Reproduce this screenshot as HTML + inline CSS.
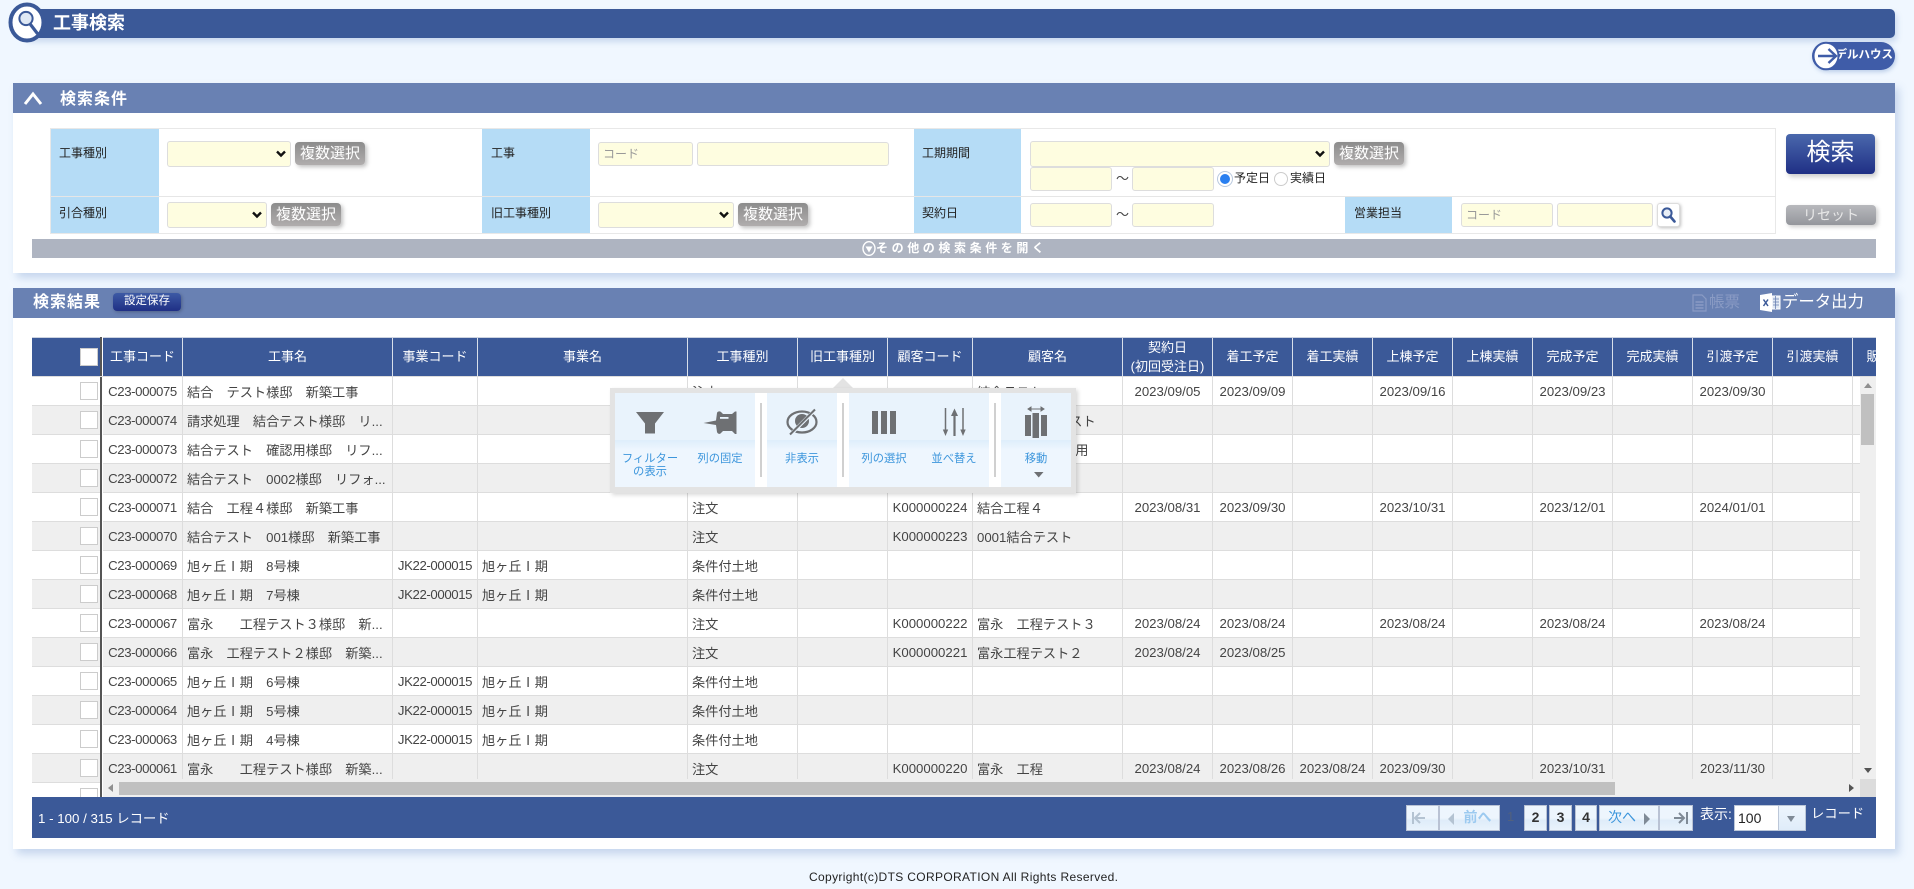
<!DOCTYPE html>
<html lang="ja"><head><meta charset="utf-8"><title>工事検索</title>
<style>
*{box-sizing:border-box}
html,body{margin:0;padding:0}
body{width:1914px;height:889px;overflow:hidden;position:relative;background:#f0f7ff;font-family:"Liberation Sans","Noto Sans CJK JP",sans-serif;font-size:12px;color:#222}
.a{position:absolute}
.panelh{background:#6981b3;left:13px;width:1882px;height:30px}
.panel{background:#fff;left:13px;width:1882px;box-shadow:4px 5px 8px rgba(90,130,190,.28)}
.inp{background:#fefde0;border:1px solid #ddd;border-radius:3px;font-size:12px;color:#999;padding-left:4px;line-height:22px}
.gb{background:linear-gradient(#8c8c8c,#b0adad);color:#fff;border-radius:4px;font-size:15px;text-align:center;line-height:23px;box-shadow:2px 2px 4px rgba(0,0,0,.25);width:70px;height:23px}
.line{background:#e6e6e6}
#grid{left:103px;top:337px;width:1773px;height:40px;overflow:hidden;background:#3b5998}
table{border-collapse:separate;border-spacing:0;table-layout:fixed;width:1830px}
#grid th{height:39px;color:#fff;font-weight:normal;font-size:13px;line-height:19px;border-right:1px solid #d8dfea;padding:0;text-align:center;white-space:nowrap;overflow:hidden}
#body{left:103px;top:377px;width:1757px;height:402px;overflow:hidden}
#body td{height:29px;border-right:1px solid #ddd;border-bottom:1px solid #ddd;padding:1px 0 0 4px;font-size:13.2px;color:#444;white-space:nowrap;overflow:hidden}
#body tr:nth-child(even) td{background:#efefef}
#body tr:nth-child(odd) td{background:#fff}
#body td.c{text-align:center;padding:1px 0 0;letter-spacing:-.38px}
#body td.d{text-align:center;padding:1px 0 0}
.lc{left:32px;width:68px;height:29px;border-bottom:1px solid #ddd}
.cb{left:80px;width:18px;height:18px;background:#fff;border:1px solid #ccc}
.gi{background:linear-gradient(#e9f3fc 0,#e9f3fc 47px,#deeefb 47px,#eef6fe 57px,#eef6fe 100%);top:393px;height:94px}
.gt{color:#3d96dc;font-size:11.3px;line-height:13px;text-align:center;width:70px;white-space:nowrap}
.sep{top:403px;width:2px;height:74px;background:#d0d0d0}
.pb{top:805px;height:26px;border:1px solid #b9c2d4;background:linear-gradient(#edf5fd 0,#edf5fd 50%,#dfecf9 60%,#e9f3fc 100%);text-align:center;color:#3d96dc;font-size:14px;line-height:23px;font-weight:normal}
.pn{color:#333;font-weight:bold;font-family:"Liberation Sans",sans-serif}
</style></head><body>

<!-- title bar -->
<div class="a" style="left:26px;top:9px;width:1869px;height:29px;background:#3b5998;border-radius:0 5px 5px 0;box-shadow:2px 4px 6px rgba(90,130,190,.25)"></div>
<svg class="a" style="left:8px;top:2px" width="38" height="41" viewBox="0 0 38 41"><ellipse cx="19" cy="20.5" rx="16.5" ry="18" fill="#fff" stroke="#3b5998" stroke-width="4"/><circle cx="18" cy="16.5" r="6.6" fill="#dfe8f4" stroke="#3b5998" stroke-width="2"/><path d="M22.5 22.5L29 31" stroke="#3b5998" stroke-width="3.2" stroke-linecap="round"/></svg>
<div class="a" style="left:53px;top:10px;font-size:18px;font-weight:bold;color:#fff;line-height:26px">工事検索</div>

<!-- model house -->
<div class="a" style="left:1812px;top:42px;width:83px;height:28px;border-radius:14px;background:#3f5ca8;box-shadow:1px 2px 4px rgba(90,130,190,.35);color:#fff;font-size:11.5px;font-weight:bold;line-height:27px;text-align:right;padding-right:2px;white-space:nowrap;overflow:hidden">モデルハウス</div>
<svg class="a" style="left:1812px;top:41px" width="28" height="30" viewBox="0 0 28 30"><ellipse cx="14" cy="15" rx="12.5" ry="13.3" fill="#fff" stroke="#3f5ca8" stroke-width="2"/><path d="M6 15H23M16.5 8L24 15L16.5 22" fill="none" stroke="#3f5ca8" stroke-width="2.4"/></svg>

<!-- 検索条件 -->
<div class="a panel" style="top:83px;height:190px"></div>
<div class="a panelh" style="top:83px"></div>
<svg class="a" style="left:23px;top:91px" width="20" height="15" viewBox="0 0 20 15"><path d="M2 13L10 3L18 13" fill="none" stroke="#fff" stroke-width="3"/></svg>
<div class="a" style="left:60px;top:87px;font-size:16px;font-weight:bold;color:#fff;letter-spacing:1px;line-height:26px">検索条件</div>

<!-- search table frame -->
<div class="a" style="left:50px;top:128px;width:1726px;height:106px;border:1px solid #e8e8e8"></div>
<div class="a line" style="left:50px;top:196px;width:1726px;height:1px"></div>
<div class="a" style="left:51px;top:129px;width:108px;height:104px;background:#b5dcf6"></div>
<div class="a" style="left:482px;top:129px;width:108px;height:104px;background:#b5dcf6"></div>
<div class="a" style="left:914px;top:129px;width:107px;height:104px;background:#b5dcf6"></div>
<div class="a" style="left:1345px;top:197px;width:107px;height:36px;background:#b5dcf6"></div>
<div class="a line" style="left:51px;top:196px;width:108px;height:1px"></div>
<div class="a line" style="left:482px;top:196px;width:108px;height:1px"></div>
<div class="a line" style="left:914px;top:196px;width:107px;height:1px"></div>

<div class="a" style="left:59px;top:144px;line-height:18px">工事種別</div>
<div class="a" style="left:59px;top:204px;line-height:18px">引合種別</div>
<div class="a" style="left:491px;top:144px;line-height:18px">工事</div>
<div class="a" style="left:491px;top:204px;line-height:18px">旧工事種別</div>
<div class="a" style="left:922px;top:144px;line-height:18px">工期期間</div>
<div class="a" style="left:922px;top:204px;line-height:18px">契約日</div>
<div class="a" style="left:1354px;top:204px;line-height:18px">営業担当</div>

<div class="a inp" style="left:167px;top:141px;width:124px;height:26px"></div>
<svg class="a" style="left:276px;top:150px" width="10" height="8" viewBox="0 0 10 8"><path d="M1 1.500L5 5.500L9 1.500" fill="none" stroke="#111" stroke-width="2.400"/></svg>
<div class="a gb" style="left:295px;top:142px">複数選択</div>
<div class="a inp" style="left:167px;top:202px;width:100px;height:26px"></div>
<svg class="a" style="left:252px;top:211px" width="10" height="8" viewBox="0 0 10 8"><path d="M1 1.500L5 5.500L9 1.500" fill="none" stroke="#111" stroke-width="2.400"/></svg>
<div class="a gb" style="left:271px;top:203px">複数選択</div>

<div class="a inp" style="left:598px;top:142px;width:95px;height:24px">コード</div>
<div class="a inp" style="left:697px;top:142px;width:192px;height:24px"></div>
<div class="a inp" style="left:598px;top:202px;width:136px;height:26px"></div>
<svg class="a" style="left:719px;top:211px" width="10" height="8" viewBox="0 0 10 8"><path d="M1 1.500L5 5.500L9 1.500" fill="none" stroke="#111" stroke-width="2.400"/></svg>
<div class="a gb" style="left:738px;top:203px">複数選択</div>

<div class="a inp" style="left:1030px;top:141px;width:300px;height:26px"></div>
<svg class="a" style="left:1315px;top:150px" width="10" height="8" viewBox="0 0 10 8"><path d="M1 1.500L5 5.500L9 1.500" fill="none" stroke="#111" stroke-width="2.400"/></svg>
<div class="a gb" style="left:1334px;top:142px">複数選択</div>
<div class="a inp" style="left:1030px;top:167px;width:82px;height:24px"></div>
<div class="a" style="left:1116px;top:169px;font-size:13px;line-height:20px;color:#444">～</div>
<div class="a inp" style="left:1132px;top:167px;width:82px;height:24px"></div>
<div class="a" style="left:1218px;top:172px;width:14px;height:14px;border-radius:50%;background:#2a7ff0;border:2px solid #fff;box-shadow:0 0 0 1px #b9c9de"></div>
<div class="a" style="left:1234px;top:170px;line-height:17px;font-size:12px">予定日</div>
<div class="a" style="left:1274px;top:172px;width:14px;height:14px;border-radius:50%;background:#fff;border:1px solid #ccc"></div>
<div class="a" style="left:1290px;top:170px;line-height:17px;font-size:12px">実績日</div>

<div class="a inp" style="left:1030px;top:203px;width:82px;height:24px"></div>
<div class="a" style="left:1116px;top:205px;font-size:13px;line-height:20px;color:#444">～</div>
<div class="a inp" style="left:1132px;top:203px;width:82px;height:24px"></div>

<div class="a inp" style="left:1461px;top:203px;width:92px;height:24px">コード</div>
<div class="a inp" style="left:1557px;top:203px;width:96px;height:24px"></div>
<div class="a" style="left:1657px;top:203px;width:23px;height:24px;background:#fff;border:1px solid #ddd;border-radius:3px;box-shadow:1px 1px 3px rgba(0,0,0,.25)"></div>
<svg class="a" style="left:1660px;top:206px" width="17" height="18" viewBox="0 0 17 18"><circle cx="7" cy="7" r="4.6" fill="#e8eef6" stroke="#3b5998" stroke-width="2"/><path d="M10.3 10.5L14.5 15.5" stroke="#3b5998" stroke-width="2.6" stroke-linecap="round"/></svg>

<div class="a" style="left:1786px;top:134px;width:89px;height:40px;border-radius:4px;background:linear-gradient(#4a68ac,#1f2f85);color:#fff;font-size:24px;text-align:center;line-height:37px;box-shadow:2px 3px 5px rgba(0,0,0,.2)">検索</div>
<div class="a" style="left:1786px;top:205px;width:90px;height:20px;border-radius:4px;background:linear-gradient(#b8b9bd,#94969c);color:#e8e8e8;font-size:14px;text-align:center;line-height:20px;box-shadow:2px 2px 4px rgba(0,0,0,.2)">リセット</div>

<div class="a" style="left:32px;top:239px;width:1844px;height:19px;background:#aeb4c1"></div>
<svg class="a" style="left:862px;top:240px" width="14" height="17" viewBox="0 0 14 17"><ellipse cx="7" cy="8.5" rx="6" ry="6.8" fill="none" stroke="#fff" stroke-width="1.4"/><path d="M3.5 6.5H10.5L7 12.5Z" fill="#fff"/></svg>
<div class="a" style="left:876px;top:239px;height:19px;font-size:12px;font-weight:bold;color:#fff;letter-spacing:3.6px;line-height:18px;white-space:nowrap">その他の検索条件を開く</div>

<!-- 検索結果 -->
<div class="a panel" style="top:288px;height:561px"></div>
<div class="a panelh" style="top:288px"></div>
<div class="a" style="left:33px;top:289px;font-size:16px;font-weight:bold;color:#fff;letter-spacing:1px;line-height:27px">検索結果</div>
<div class="a" style="left:113px;top:293px;width:68px;height:18px;border-radius:4px;background:linear-gradient(#3d5aa5,#1f2f85);color:#fff;font-size:11.5px;text-align:center;line-height:17px;box-shadow:1px 1px 3px rgba(0,0,0,.25)">設定保存</div>

<svg class="a" style="left:1692px;top:294px" width="15" height="18" viewBox="0 0 15 18"><path d="M1 1H10L14 5V17H1Z" fill="none" stroke="#8a9bc4" stroke-width="1.2"/><path d="M3.5 8H11.5M3.5 11H11.5M3.5 14H11.5" stroke="#8a9bc4" stroke-width="1.6"/></svg>
<div class="a" style="left:1709px;top:291px;font-size:15.5px;color:#8a9bc4;line-height:23px">帳票</div>
<svg class="a" style="left:1760px;top:293px" width="21" height="19" viewBox="0 0 21 19"><path d="M12 3H20V16H12Z" fill="#dfe7f3" stroke="#fff" stroke-width="1"/><path d="M13 6H19M13 9H19M13 12H19M15.5 3V16" stroke="#6981b3" stroke-width=".8"/><path d="M0 2L12 0V19L0 17Z" fill="#fff"/><path d="M3.5 6.5L8 13M8 6.5L3.5 13" stroke="#3b5998" stroke-width="1.5"/></svg>
<div class="a" style="left:1782px;top:290px;font-size:16.4px;color:#fff;line-height:24px;white-space:nowrap">データ出力</div>

<!-- left fixed -->
<div class="a" style="left:32px;top:337px;width:69px;height:40px;background:#3b5998;border-top:1px solid #ccd3e0"></div>
<div class="a cb" style="top:348px"></div>
<div class="a lc" style="top:377px;background:#fff"></div><div class="a cb" style="top:382px"></div>
<div class="a lc" style="top:406px;background:#efefef"></div><div class="a cb" style="top:411px"></div>
<div class="a lc" style="top:435px;background:#fff"></div><div class="a cb" style="top:440px"></div>
<div class="a lc" style="top:464px;background:#efefef"></div><div class="a cb" style="top:469px"></div>
<div class="a lc" style="top:493px;background:#fff"></div><div class="a cb" style="top:498px"></div>
<div class="a lc" style="top:522px;background:#efefef"></div><div class="a cb" style="top:527px"></div>
<div class="a lc" style="top:551px;background:#fff"></div><div class="a cb" style="top:556px"></div>
<div class="a lc" style="top:580px;background:#efefef"></div><div class="a cb" style="top:585px"></div>
<div class="a lc" style="top:609px;background:#fff"></div><div class="a cb" style="top:614px"></div>
<div class="a lc" style="top:638px;background:#efefef"></div><div class="a cb" style="top:643px"></div>
<div class="a lc" style="top:667px;background:#fff"></div><div class="a cb" style="top:672px"></div>
<div class="a lc" style="top:696px;background:#efefef"></div><div class="a cb" style="top:701px"></div>
<div class="a lc" style="top:725px;background:#fff"></div><div class="a cb" style="top:730px"></div>
<div class="a lc" style="top:754px;background:#efefef"></div><div class="a cb" style="top:759px"></div>
<div class="a lc" style="top:783px;height:14px;background:#fff;border:0"></div><div class="a" style="left:80px;top:788px;width:18px;height:9px;background:#fff;border:1px solid #ccc;border-bottom:0"></div>
<div class="a" style="left:100px;top:337px;width:2px;height:460px;background:#555"></div>

<!-- grid header -->
<div class="a" id="grid">
<table><colgroup><col style="width:80px"><col style="width:210px"><col style="width:85px"><col style="width:210px"><col style="width:110px"><col style="width:90px"><col style="width:85px"><col style="width:150px"><col style="width:90px"><col style="width:80px"><col style="width:80px"><col style="width:80px"><col style="width:80px"><col style="width:80px"><col style="width:80px"><col style="width:80px"><col style="width:80px"><col style="width:80px"></colgroup>
<tr><th>工事コード</th><th>工事名</th><th>事業コード</th><th>事業名</th><th>工事種別</th><th>旧工事種別</th><th>顧客コード</th><th>顧客名</th><th>契約日<br>(初回受注日)</th><th>着工予定</th><th>着工実績</th><th>上棟予定</th><th>上棟実績</th><th>完成予定</th><th>完成実績</th><th>引渡予定</th><th>引渡実績</th><th>販売予定</th></tr></table>
</div>
<div class="a" style="left:103px;top:337px;width:1773px;height:1px;background:#ccd3e0"></div>
<div class="a" style="left:32px;top:376px;width:1844px;height:1px;background:#ddd"></div>

<!-- grid body -->
<div class="a" id="body">
<table><colgroup><col style="width:80px"><col style="width:210px"><col style="width:85px"><col style="width:210px"><col style="width:110px"><col style="width:90px"><col style="width:85px"><col style="width:150px"><col style="width:90px"><col style="width:80px"><col style="width:80px"><col style="width:80px"><col style="width:80px"><col style="width:80px"><col style="width:80px"><col style="width:80px"><col style="width:80px"><col style="width:80px"></colgroup>
<tr><td class="c">C23-000075</td><td>結合　テスト様邸　新築工事</td><td class="c"></td><td></td><td>注文</td><td></td><td class="d"></td><td>結合テスト</td><td class="d">2023/09/05</td><td class="d">2023/09/09</td><td class="d"></td><td class="d">2023/09/16</td><td class="d"></td><td class="d">2023/09/23</td><td class="d"></td><td class="d">2023/09/30</td><td class="d"></td><td></td></tr>
<tr><td class="c">C23-000074</td><td>請求処理　結合テスト様邸　リ...</td><td class="c"></td><td></td><td>注文</td><td></td><td class="d"></td><td>請求処理結合テスト</td><td class="d"></td><td class="d"></td><td class="d"></td><td class="d"></td><td class="d"></td><td class="d"></td><td class="d"></td><td class="d"></td><td class="d"></td><td></td></tr>
<tr><td class="c">C23-000073</td><td>結合テスト　確認用様邸　リフ...</td><td class="c"></td><td></td><td>注文</td><td></td><td class="d"></td><td style="padding-left:10px">結合テスト確認用</td><td class="d"></td><td class="d"></td><td class="d"></td><td class="d"></td><td class="d"></td><td class="d"></td><td class="d"></td><td class="d"></td><td class="d"></td><td></td></tr>
<tr><td class="c">C23-000072</td><td>結合テスト　0002様邸　リフォ...</td><td class="c"></td><td></td><td>注文</td><td></td><td class="d"></td><td></td><td class="d"></td><td class="d"></td><td class="d"></td><td class="d"></td><td class="d"></td><td class="d"></td><td class="d"></td><td class="d"></td><td class="d"></td><td></td></tr>
<tr><td class="c">C23-000071</td><td>結合　工程４様邸　新築工事</td><td class="c"></td><td></td><td>注文</td><td></td><td class="d">K000000224</td><td>結合工程４</td><td class="d">2023/08/31</td><td class="d">2023/09/30</td><td class="d"></td><td class="d">2023/10/31</td><td class="d"></td><td class="d">2023/12/01</td><td class="d"></td><td class="d">2024/01/01</td><td class="d"></td><td></td></tr>
<tr><td class="c">C23-000070</td><td>結合テスト　001様邸　新築工事</td><td class="c"></td><td></td><td>注文</td><td></td><td class="d">K000000223</td><td>0001結合テスト</td><td class="d"></td><td class="d"></td><td class="d"></td><td class="d"></td><td class="d"></td><td class="d"></td><td class="d"></td><td class="d"></td><td class="d"></td><td></td></tr>
<tr><td class="c">C23-000069</td><td>旭ヶ丘Ⅰ期　8号棟</td><td class="c">JK22-000015</td><td>旭ヶ丘Ⅰ期</td><td>条件付土地</td><td></td><td class="d"></td><td></td><td class="d"></td><td class="d"></td><td class="d"></td><td class="d"></td><td class="d"></td><td class="d"></td><td class="d"></td><td class="d"></td><td class="d"></td><td></td></tr>
<tr><td class="c">C23-000068</td><td>旭ヶ丘Ⅰ期　7号棟</td><td class="c">JK22-000015</td><td>旭ヶ丘Ⅰ期</td><td>条件付土地</td><td></td><td class="d"></td><td></td><td class="d"></td><td class="d"></td><td class="d"></td><td class="d"></td><td class="d"></td><td class="d"></td><td class="d"></td><td class="d"></td><td class="d"></td><td></td></tr>
<tr><td class="c">C23-000067</td><td>富永　　工程テスト３様邸　新...</td><td class="c"></td><td></td><td>注文</td><td></td><td class="d">K000000222</td><td>富永　工程テスト３</td><td class="d">2023/08/24</td><td class="d">2023/08/24</td><td class="d"></td><td class="d">2023/08/24</td><td class="d"></td><td class="d">2023/08/24</td><td class="d"></td><td class="d">2023/08/24</td><td class="d"></td><td></td></tr>
<tr><td class="c">C23-000066</td><td>富永　工程テスト２様邸　新築...</td><td class="c"></td><td></td><td>注文</td><td></td><td class="d">K000000221</td><td>富永工程テスト２</td><td class="d">2023/08/24</td><td class="d">2023/08/25</td><td class="d"></td><td class="d"></td><td class="d"></td><td class="d"></td><td class="d"></td><td class="d"></td><td class="d"></td><td></td></tr>
<tr><td class="c">C23-000065</td><td>旭ヶ丘Ⅰ期　6号棟</td><td class="c">JK22-000015</td><td>旭ヶ丘Ⅰ期</td><td>条件付土地</td><td></td><td class="d"></td><td></td><td class="d"></td><td class="d"></td><td class="d"></td><td class="d"></td><td class="d"></td><td class="d"></td><td class="d"></td><td class="d"></td><td class="d"></td><td></td></tr>
<tr><td class="c">C23-000064</td><td>旭ヶ丘Ⅰ期　5号棟</td><td class="c">JK22-000015</td><td>旭ヶ丘Ⅰ期</td><td>条件付土地</td><td></td><td class="d"></td><td></td><td class="d"></td><td class="d"></td><td class="d"></td><td class="d"></td><td class="d"></td><td class="d"></td><td class="d"></td><td class="d"></td><td class="d"></td><td></td></tr>
<tr><td class="c">C23-000063</td><td>旭ヶ丘Ⅰ期　4号棟</td><td class="c">JK22-000015</td><td>旭ヶ丘Ⅰ期</td><td>条件付土地</td><td></td><td class="d"></td><td></td><td class="d"></td><td class="d"></td><td class="d"></td><td class="d"></td><td class="d"></td><td class="d"></td><td class="d"></td><td class="d"></td><td class="d"></td><td></td></tr>
<tr><td class="c">C23-000061</td><td>富永　　工程テスト様邸　新築...</td><td class="c"></td><td></td><td>注文</td><td></td><td class="d">K000000220</td><td>富永　工程</td><td class="d">2023/08/24</td><td class="d">2023/08/26</td><td class="d">2023/08/24</td><td class="d">2023/09/30</td><td class="d"></td><td class="d">2023/10/31</td><td class="d"></td><td class="d">2023/11/30</td><td class="d"></td><td></td></tr>
</table>
</div>

<!-- scrollbars -->
<div class="a" style="left:1860px;top:377px;width:16px;height:402px;background:#efefef"></div>
<div class="a" style="left:1861px;top:394px;width:13px;height:51px;background:#c0c0c0"></div>
<div class="a" style="left:1864px;top:383px;border:4px solid transparent;border-top:0;border-bottom:5px solid #8f8f8f"></div>
<div class="a" style="left:1864px;top:768px;border:4px solid transparent;border-bottom:0;border-top:5px solid #555"></div>
<div class="a" style="left:103px;top:779px;width:1757px;height:18px;background:#efefef"></div>
<div class="a" style="left:119px;top:782px;width:1496px;height:13px;background:#c0c0c0"></div>
<div class="a" style="left:108px;top:784px;border:4px solid transparent;border-left:0;border-right:5px solid #8f8f8f"></div>
<div class="a" style="left:1849px;top:784px;border:4px solid transparent;border-right:0;border-left:5px solid #555"></div>
<div class="a" style="left:1860px;top:779px;width:16px;height:18px;background:#dcdcdc"></div>

<!-- footer -->
<div class="a" style="left:32px;top:797px;width:1844px;height:41px;background:#3b5998;color:#fff"></div>
<div class="a" style="left:38px;top:809px;font-size:13.3px;color:#fff;line-height:19px;white-space:nowrap">1 - 100 / 315 レコード</div>

<div class="a pb" style="left:1406px;width:33px"></div>
<svg class="a" style="left:1411px;top:811px" width="22" height="14" viewBox="0 0 22 14"><path d="M2 1V13M14 7H4M9 2L4 7L9 12" fill="none" stroke="#b4c3d2" stroke-width="2"/></svg>
<div class="a pb" style="left:1439px;width:61px;color:#9ccaf0;font-weight:bold;padding-left:16px">前へ</div>
<div class="a" style="left:1448px;top:813px;border:5px solid transparent;border-left:0;border-right:6px solid #b4c3d2;border-top-width:6px;border-bottom-width:6px"></div>
<div class="a" style="left:1507px;top:806px;color:#52617e;font-size:13px;line-height:22px">1</div>
<div class="a pb pn" style="left:1524px;width:23px">2</div>
<div class="a pb pn" style="left:1549px;width:23px">3</div>
<div class="a pb pn" style="left:1575px;width:22px">4</div>
<div class="a pb" style="left:1599px;width:60px;padding-right:14px">次へ</div>
<div class="a" style="left:1644px;top:813px;border:5px solid transparent;border-right:0;border-left:6px solid #7f8a96;border-top-width:6px;border-bottom-width:6px"></div>
<div class="a pb" style="left:1659px;width:34px"></div>
<svg class="a" style="left:1673px;top:811px" width="16" height="14" viewBox="0 0 16 14"><path d="M14 1V13M1 7H11M6 2L11 7L6 12" fill="none" stroke="#7f8a96" stroke-width="2"/></svg>
<div class="a" style="left:1700px;top:803px;font-size:14px;color:#fff;line-height:22px;white-space:nowrap">表示:</div>
<div class="a" style="left:1734px;top:805px;width:72px;height:26px;background:#fff;border:1px solid #bcc7d8"></div>
<div class="a" style="left:1738px;top:807px;font-size:14px;color:#222;line-height:22px">100</div>
<div class="a" style="left:1778px;top:806px;width:27px;height:24px;background:linear-gradient(#edf5fd,#dfecf9);border-left:1px solid #bcc7d8"></div>
<div class="a" style="left:1787px;top:816px;border:4.5px solid transparent;border-bottom:0;border-top:6px solid #7f8a96"></div>
<div class="a" style="left:1811px;top:803px;font-size:13.3px;color:#fff;line-height:21px;white-space:nowrap">レコード</div>

<!-- popup -->
<div class="a" style="left:833px;top:378px;border:10px solid transparent;border-top:0;border-bottom:10px solid #e3e3e3"></div>
<div class="a" style="left:610px;top:388px;width:466px;height:105px;background:#e3e3e3;box-shadow:2px 2px 4px rgba(0,0,0,.15)"></div>
<div class="a" style="left:615px;top:393px;width:456px;height:94px;background:#fff"></div>
<div class="a gi" style="left:615px;width:140px"></div>
<div class="a gi" style="left:767px;width:70px"></div>
<div class="a gi" style="left:849px;width:140px"></div>
<div class="a gi" style="left:1001px;width:70px"></div>
<div class="a sep" style="left:760px"></div>
<div class="a sep" style="left:842px"></div>
<div class="a sep" style="left:994px"></div>

<svg class="a" style="left:610px;top:388px" width="466" height="105" viewBox="610 388 466 105">
<path d="M636 412H664L655 423.500V433.500H645V423.500Z" fill="#6e7073"/>
<path d="M703.500 423L716 420.500L717 413C717.500 411 720 411 721 412L723 414H732L735 411.500H736.500V434H735L732 431H723L721 433C720 434.500 717.500 434 717 432L716 425Z" fill="#6e7073"/><rect x="720" y="417" width="8.500" height="1.800" fill="#eaf4fd"/>
<ellipse cx="802" cy="422" rx="14.500" ry="10.500" fill="none" stroke="#6e7073" stroke-width="2.200"/><circle cx="802" cy="421" r="7" fill="#6e7073"/><path d="M790 435L815 410" stroke="#eaf4fd" stroke-width="3.600"/><path d="M790 434.500L815 409.500" stroke="#6e7073" stroke-width="2"/>
<rect x="872" y="411" width="6" height="23" fill="#6e7073"/><rect x="881" y="411" width="6" height="23" fill="#6e7073"/><rect x="890" y="411" width="6" height="23" fill="#6e7073"/>
<path d="M945.500 408V431" stroke="#6e7073" stroke-width="1.500"/><path d="M942.800 429.500H948.200L945.500 436Z" fill="#6e7073"/>
<path d="M954.500 414V436" stroke="#6e7073" stroke-width="2.200"/><path d="M951 416H958L954.500 408.500Z" fill="#6e7073"/>
<path d="M963 408V431" stroke="#6e7073" stroke-width="1.500"/><path d="M960.300 429.500H965.700L963 436Z" fill="#6e7073"/>
<path d="M1029 409H1043M1031 407L1028 409L1031 411ZM1041 407L1044 409L1041 411Z" stroke="#6e7073" stroke-width="1" fill="#6e7073"/>
<rect x="1025" y="415" width="6" height="21" fill="#6e7073"/><rect x="1032.500" y="413" width="6.500" height="25" fill="#6e7073"/><rect x="1041" y="415" width="6" height="21" fill="#6e7073"/>
<path d="M1034 472H1043.500L1038.700 477.500Z" fill="#6e7073"/>
</svg>

<div class="a gt" style="left:615px;top:453px">フィルター<br>の表示</div>
<div class="a gt" style="left:685px;top:453px">列の固定</div>
<div class="a gt" style="left:767px;top:453px">非表示</div>
<div class="a gt" style="left:849px;top:453px">列の選択</div>
<div class="a gt" style="left:919px;top:453px">並べ替え</div>
<div class="a gt" style="left:1001px;top:453px">移動</div>

<!-- copyright -->
<div class="a" style="left:809px;top:869px;font-size:12px;color:#222;line-height:16px;white-space:nowrap;letter-spacing:.35px">Copyright(c)DTS CORPORATION All Rights Reserved.</div>
</body></html>
